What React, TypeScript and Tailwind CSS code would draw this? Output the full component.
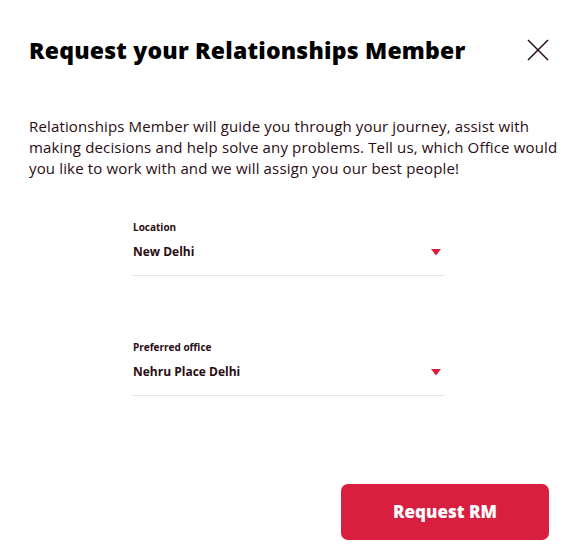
import React, { useState } from 'react'

const ChevronTriangle = () => (
  <svg width="10" height="7" viewBox="0 0 10 7" className="shrink-0">
    <path d="M0 0h10L5 6.5z" fill="#d81f3f" />
  </svg>
)

const SelectField: React.FC<{ label: string; value: string }> = ({ label, value }) => (
  <div className="w-[312px] border-b border-[#e6e6e6]">
    <div className="text-[10px] leading-[14px] font-bold text-[#2a0d13]">{label}</div>
    <div className="flex items-center justify-between pt-[10px] pb-[15px] pr-[4px]">
      <span className="text-[12px] leading-[16px] font-bold text-[#2a0d13]">{value}</span>
      <ChevronTriangle />
    </div>
  </div>
)

export default function App() {
  const [open, setOpen] = useState(true)

  return (
    <div className="w-[567px] h-[550px] bg-white font-['Open_Sans',sans-serif] text-[#2a0d13]">
      {open && (
        <div className="flex flex-col h-full pl-[29px] pr-[18px]">
          <div className="flex items-center justify-between pt-[36px]">
            <h2 className="text-[23px] leading-[28px] font-extrabold text-black tracking-[0.2px]">
              Request your Relationships Member
            </h2>
            <button onClick={() => setOpen(false)} className="p-0 text-[#2a0d13]">
              <svg width="22" height="22" viewBox="0 0 22 22" fill="none" stroke="currentColor" strokeWidth="1.5">
                <path d="M1 1l20 20M21 1L1 21" />
              </svg>
            </button>
          </div>

          <p className="mt-[52px] w-[534px] text-[15px] leading-[21px] tracking-[0.15px]">
            Relationships Member will guide you through your journey, assist with making decisions and help solve any
            problems. Tell us, which Office would you like to work with and we will assign you our best people!
          </p>

          <div className="flex flex-col items-start pl-[104px] mt-[41px] gap-[64px]">
            <SelectField label="Location" value="New Delhi" />
            <SelectField label="Preferred office" value="Nehru Place Delhi" />
          </div>

          <div className="flex justify-end mt-auto mb-[10px]">
            <button className="w-[208px] h-[56px] rounded-[7px] bg-[#d81f3f] text-white text-[17px] font-extrabold">
              Request RM
            </button>
          </div>
        </div>
      )}
    </div>
  )
}
